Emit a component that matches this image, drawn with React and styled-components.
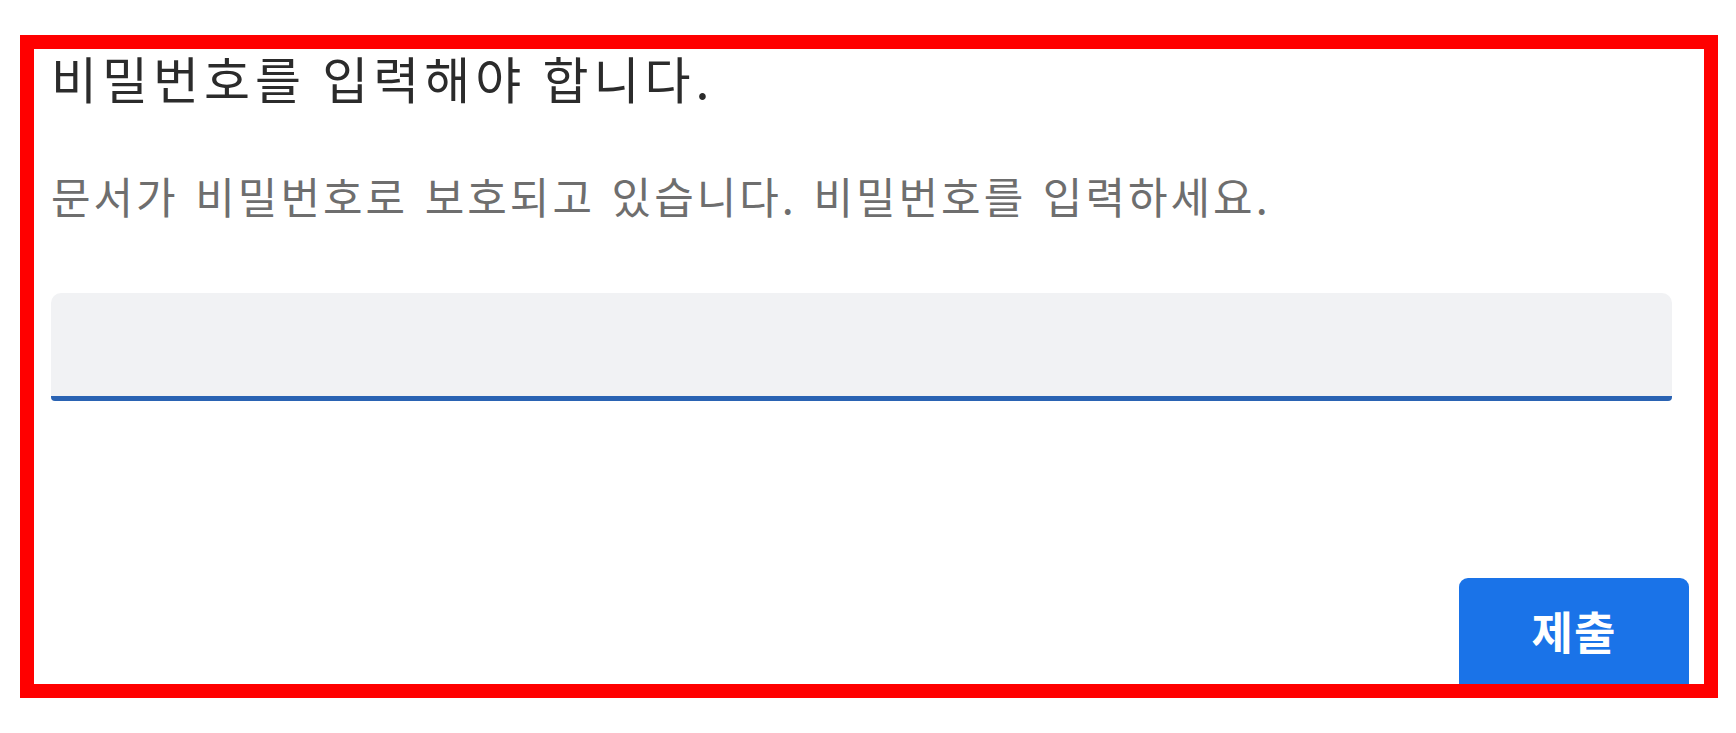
import styled, { createGlobalStyle } from "styled-components";

const GlobalStyle = createGlobalStyle`
  body {
    margin: 0;
    background: #ffffff;
    font-family: "Noto Sans CJK KR", "Noto Sans", sans-serif;
  }
`

// red marker frame round the captured dialog
const Frame = styled.div`
  box-sizing: border-box;
  width: 1698px;
  height: 663px;
  margin: 35px 0 0 20px;
  border: 14px solid #ff0000;
  overflow: hidden;
  background: #ffffff;
`

const Dialog = styled.div`
  display: flex;
  flex-direction: column;
  padding: 3px 15px 0 17px;
`

const Title = styled.h1`
  margin: 0;
  font-size: 50px;
  line-height: 50px;
  font-weight: 400;
  letter-spacing: 5px;
  color: #2b2b2b;
`

const Message = styled.p`
  margin: 72px 0 0;
  font-size: 43px;
  line-height: 43px;
  font-weight: 400;
  letter-spacing: 3px;
  word-spacing: 4px;
  color: #6e6e6e;
`

const PasswordInput = styled.input`
  box-sizing: border-box;
  width: 1621px;
  height: 108px;
  margin-top: 76px;
  padding: 0 24px;
  border: none;
  border-bottom: 5px solid #2a63b3;
  border-radius: 10px 10px 4px 4px;
  background: #f1f2f4;
  font-family: inherit;
  font-size: 40px;
  outline: none;
`

const Actions = styled.div`
  display: flex;
  justify-content: flex-end;
  margin-top: 177px;
`

const SubmitButton = styled.button`
  width: 230px;
  height: 116px;
  border: none;
  border-radius: 9px;
  background: #1a73e8;
  color: #ffffff;
  font-family: inherit;
  font-size: 45px;
  font-weight: 700;
  letter-spacing: 1px;
  padding: 0 0 12px;
`

export default function App() {
  return (
    <>
      <GlobalStyle />
      <Frame>
        <Dialog>
          <Title>비밀번호를 입력해야 합니다.</Title>
          <Message>문서가 비밀번호로 보호되고 있습니다. 비밀번호를 입력하세요.</Message>
          <PasswordInput type="password" />
          <Actions>
            <SubmitButton>제출</SubmitButton>
          </Actions>
        </Dialog>
      </Frame>
    </>
  )
}
